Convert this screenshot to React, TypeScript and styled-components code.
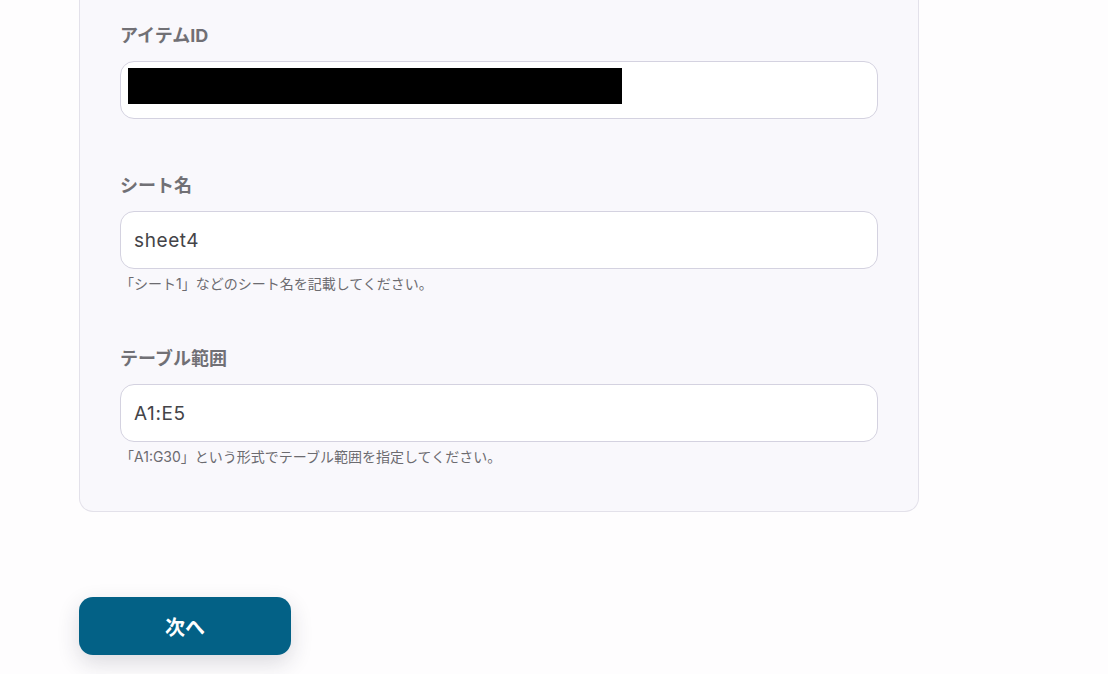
import React from "react";
import styled, { createGlobalStyle } from "styled-components";

const GlobalStyle = createGlobalStyle`
  html, body {
    margin: 0;
    padding: 0;
    background: #fefdfe;
    font-family: Inter, "Noto Sans CJK JP", sans-serif;
  }
`;

const Page = styled.div`
  width: 1108px;
  height: 674px;
  overflow: hidden;
  padding-left: 79px;
  box-sizing: border-box;
`;

const Card = styled.section`
  width: 840px;
  box-sizing: border-box;
  background: #f9f8fc;
  border: 1px solid #e3e1ea;
  border-top: none;
  border-radius: 0 0 14px 14px;
  padding: 22px 40px 44px;
  display: flex;
  flex-direction: column;
`;

const Field = styled.div<{ $gap: number }>`
  display: flex;
  flex-direction: column;
  margin-bottom: ${(p) => p.$gap}px;
  &:last-child {
    margin-bottom: 0;
  }
`;

const Label = styled.label`
  font-size: 18px;
  font-weight: 700;
  line-height: 28px;
  color: #717075;
  margin-bottom: 11px;
`;

const Input = styled.div`
  height: 58px;
  box-sizing: border-box;
  background: #ffffff;
  border: 1px solid #d4d2e0;
  border-radius: 14px;
  padding: 0 13px;
  display: flex;
  align-items: center;
  font-size: 19px;
  color: #444448;
  letter-spacing: 0.6px;
`;

const Redacted = styled.div`
  width: 494px;
  height: 36px;
  background: #000000;
  margin-left: -6px;
  margin-top: -8px;
`;

const Help = styled.p`
  margin: 5px 0 0;
  font-size: 14px;
  line-height: 20px;
  color: #6c6b70;
`;

const Footer = styled.div`
  padding-top: 85px;
`;

const NextButton = styled.button`
  width: 212px;
  height: 58px;
  border: none;
  border-radius: 14px;
  background: #036186;
  color: #ffffff;
  font-family: Inter, "Noto Sans CJK JP", sans-serif;
  font-size: 20px;
  font-weight: 700;
  box-shadow: 0 8px 22px rgba(40, 40, 60, 0.16);
  cursor: pointer;
`;

export default function App() {
  return (
    <Page>
      <GlobalStyle />
      <Card>
        <Field $gap={53}>
          <Label>アイテムID</Label>
          <Input>
            <Redacted />
          </Input>
        </Field>
        <Field $gap={51}>
          <Label>シート名</Label>
          <Input>sheet4</Input>
          <Help>「シート1」などのシート名を記載してください。</Help>
        </Field>
        <Field $gap={0}>
          <Label>テーブル範囲</Label>
          <Input>A1:E5</Input>
          <Help>「A1:G30」という形式でテーブル範囲を指定してください。</Help>
        </Field>
      </Card>
      <Footer>
        <NextButton>次へ</NextButton>
      </Footer>
    </Page>
  );
}
